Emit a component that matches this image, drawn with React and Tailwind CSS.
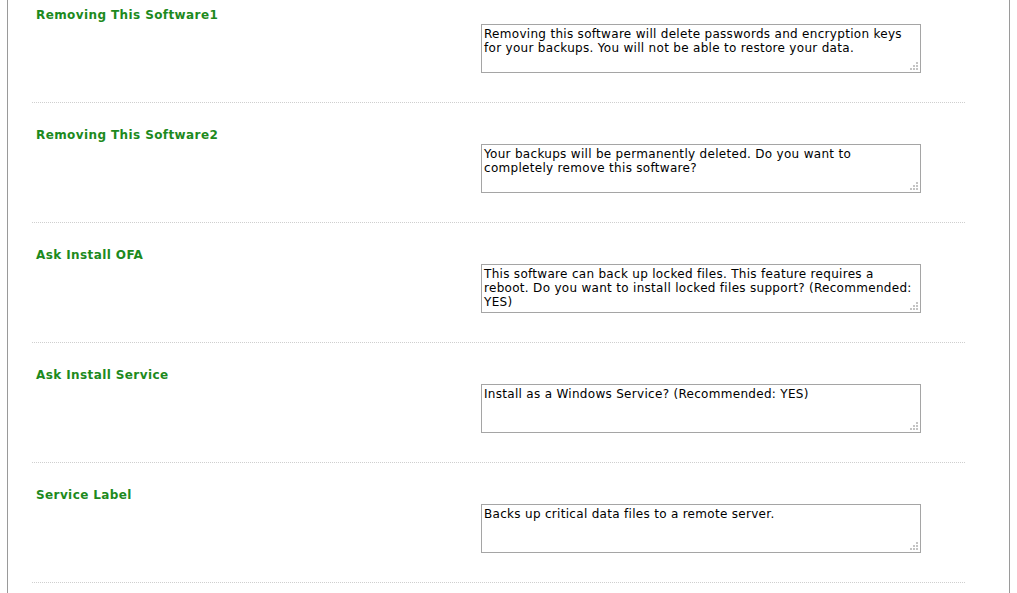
const rows = [
  {
    label: 'Removing This Software1',
    text: 'Removing this software will delete passwords and encryption keys for your backups. You will not be able to restore your data.',
  },
  {
    label: 'Removing This Software2',
    text: 'Your backups will be permanently deleted. Do you want to completely remove this software?',
  },
  {
    label: 'Ask Install OFA',
    text: 'This software can back up locked files. This feature requires a reboot. Do you want to install locked files support? (Recommended: YES)',
  },
  {
    label: 'Ask Install Service',
    text: 'Install as a Windows Service? (Recommended: YES)',
  },
  {
    label: 'Service Label',
    text: 'Backs up critical data files to a remote server.',
  },
]

function Grip() {
  // the little dotted resize corner
  const dots = [
    [6, 0],
    [3, 3],
    [6, 3],
    [0, 6],
    [3, 6],
    [6, 6],
  ]
  return (
    <svg className="absolute right-[3px] bottom-[3px]" width="8" height="8" viewBox="0 0 8 8">
      {dots.map(([x, y]) => (
        <rect key={`${x}-${y}`} x={x} y={y} width="2" height="2" fill="#c4c4c4" />
      ))}
    </svg>
  )
}

export default function App() {
  return (
    <div className="h-[593px] overflow-hidden bg-white font-['DejaVu_Sans',Verdana,sans-serif]">
      <div className="ml-[7px] w-[1003px] h-[593px] flex flex-col border-x border-[#9a9a9a]">
        <div className="-mt-[17px] pl-[24px]">
          {rows.map((r) => (
            <div
              key={r.label}
              className="w-[933px] h-[120px] border-b border-dotted border-[#cfcfcf] pt-[25px] flex items-start"
            >
              <div className="w-[449px] pl-[4px] text-[12px] leading-[14px] font-bold tracking-[0.4px] text-[#1d8a1d]">
                {r.label}
              </div>
              <div className="relative mt-[16px]">
                <textarea
                  readOnly
                  defaultValue={r.text}
                  className="block w-[440px] h-[49px] border border-[#a5a5a5] px-[2px] pt-[2px] text-[12px] leading-[14px] tracking-[0.3px] text-black resize-none outline-none font-['DejaVu_Sans',Tahoma,sans-serif]"
                />
                <Grip />
              </div>
            </div>
          ))}
        </div>
      </div>
    </div>
  )
}
